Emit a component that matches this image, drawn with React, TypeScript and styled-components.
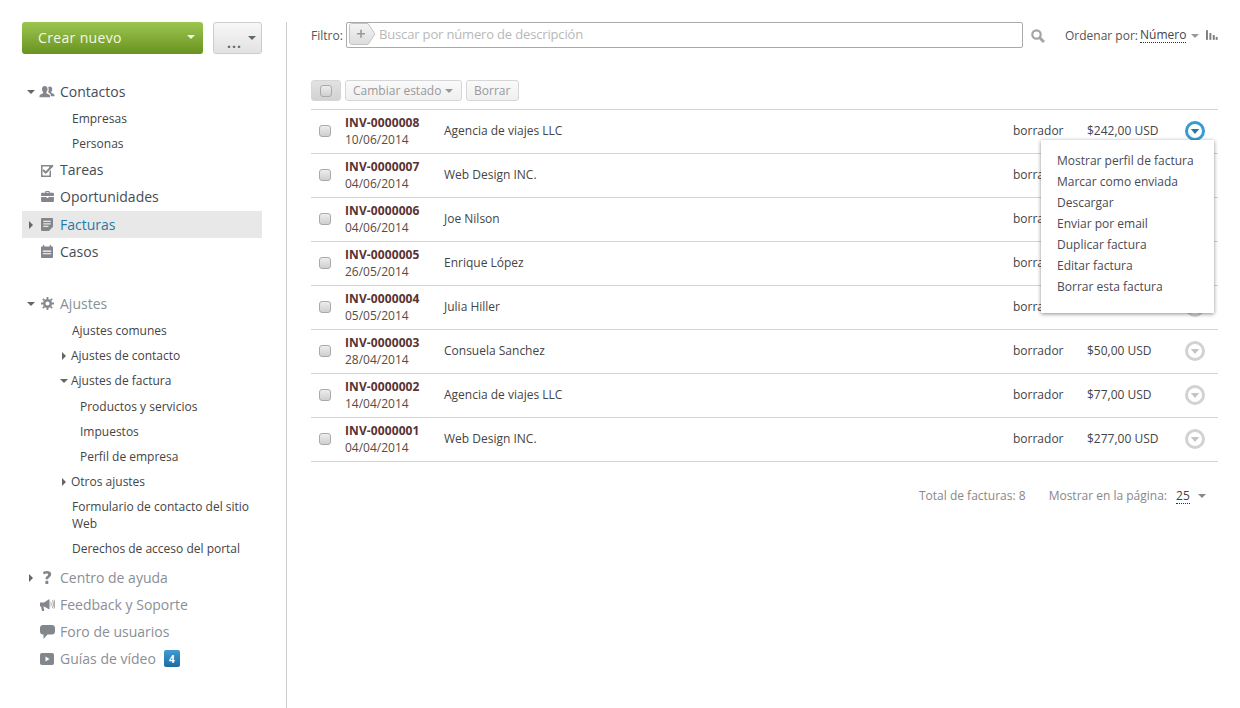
import React from "react";
import styled, { createGlobalStyle } from "styled-components";

const Global = createGlobalStyle`
  html, body { margin: 0; padding: 0; background: #fff; }
  body { font-family: "Open Sans", "Liberation Sans", sans-serif; color: #444; }
  * { box-sizing: border-box; }
`;

const Page = styled.div`
  display: flex;
  width: 1240px;
  height: 708px;
  padding: 22px 22px 0 22px;
  overflow: hidden;
`;

const Sidebar = styled.aside`
  width: 240px;
  flex: none;
  margin-right: 24px;
`;

const TopButtons = styled.div`
  display: flex;
  gap: 10px;
  height: 32px;
  margin-bottom: 24px;
`;

const CreateButton = styled.div`
  width: 181px;
  border-radius: 3px;
  background: linear-gradient(#9cc550, #699320);
  color: #f4f8e4;
  font-size: 14px;
  letter-spacing: 0.35px;
  display: flex;
  align-items: center;
  justify-content: space-between;
  padding: 0 8px 2px 16px;
`;

const MoreButton = styled.div`
  width: 49px;
  border: 1px solid #ccc;
  border-radius: 3px;
  background: linear-gradient(#f7f7f7, #e2e2e2);
  color: #666;
  font-size: 14px;
  font-weight: 700;
  letter-spacing: 1px;
  display: flex;
  align-items: center;
  justify-content: space-between;
  padding: 0 5px 0 13px;
  line-height: 1;
`;

const Dots = styled.span`
  padding-top: 9px;
`;

const Caret = styled.i<{ $dir?: "down" | "right"; $color?: string; $size?: number }>`
  display: block;
  flex: none;
  width: 0;
  height: 0;
  ${(p) => {
    const s = p.$size ?? 4;
    const c = p.$color ?? "#666";
    return p.$dir === "right"
      ? `border-top: ${s}px solid transparent; border-bottom: ${s}px solid transparent; border-left: ${s}px solid ${c};`
      : `border-left: ${s}px solid transparent; border-right: ${s}px solid transparent; border-top: ${s}px solid ${c};`;
  }}
`;

const NavGroup = styled.nav<{ $gap?: number }>`
  margin-top: ${(p) => p.$gap ?? 0}px;
`;

const NavRow = styled.div<{ $active?: boolean; $muted?: boolean; $spaced?: boolean }>`
  display: flex;
  align-items: center;
  height: 27px;
  margin-top: ${(p) => (p.$spaced ? 1 : 0)}px;
  font-size: 14px;
  background: ${(p) => (p.$active ? "#e8e8e8" : "transparent")};
  color: ${(p) => (p.$active ? "#1f7ba6" : p.$muted ? "#8a8f96" : "#444c55")};
`;

const CaretSlot = styled.span`
  width: 18px;
  flex: none;
  display: flex;
  justify-content: center;
`;

const IconSlot = styled.span`
  width: 14px;
  margin-right: 6px;
  flex: none;
  display: flex;
  align-items: center;
  justify-content: center;
  & > svg { flex: none; }
`;

const SubList = styled.div<{ $end?: number }>`
  padding: 1px 0 ${(p) => p.$end ?? 0}px;
`;

const SubRow = styled.div<{ $level?: number; $tree?: boolean }>`
  display: flex;
  align-items: center;
  min-height: 25px;
  font-size: 12px;
  line-height: 17px;
  color: #444;
  padding: 4px 10px 4px ${(p) => (p.$level === 2 ? 58 : p.$tree ? 37 : 50)}px;
`;

const SubNest = styled.div`
  padding-top: 1px;
`;

const TreeCaret = styled.span`
  width: 12px;
  padding-right: 2px;
  flex: none;
  display: flex;
  justify-content: center;
`;

const Badge = styled.span`
  width: 16px;
  height: 17px;
  margin-left: 8px;
  border-radius: 2px;
  background: linear-gradient(#3f9cd3, #1b6ca2);
  color: #fff;
  font-size: 10px;
  font-weight: 700;
  display: flex;
  align-items: center;
  justify-content: center;
`;

const Main = styled.main`
  flex: 1;
  border-left: 1px solid #ccc;
  padding-left: 24px;
  min-width: 0;
`;

const FilterBar = styled.div`
  display: flex;
  align-items: center;
  height: 26px;
  font-size: 12px;
`;

const FilterLabel = styled.span`
  width: 35px;
  flex: none;
  color: #555;
`;

const SearchBox = styled.div`
  width: 677px;
  height: 26px;
  flex: none;
  border: 1px solid #aaa;
  border-radius: 2px;
  display: flex;
  align-items: center;
  padding: 0 0 2px 2px;
  gap: 3px;
  color: #b8b8b8;
  font-size: 13px;
  letter-spacing: -0.16px;
`;

const SearchIcon = styled.span`
  width: 42px;
  flex: none;
  display: flex;
  padding: 1px 0 0 8px;
`;

const SortLabel = styled.span`
  color: #555;
  white-space: nowrap;
`;

const Dotted = styled.span`
  border-bottom: 1px dotted #333;
  color: #444;
  line-height: 15px;
`;

const SortValue = styled(Dotted)`
  margin-left: 2px;
`;

const SortCaret = styled.span`
  margin: 1px 7px 0 5px;
`;

const Toolbar = styled.div`
  display: flex;
  gap: 4px;
  height: 21px;
  margin-top: 32px;
  margin-bottom: 8px;
`;

const ToolButton = styled.div<{ $w: number; $pressed?: boolean }>`
  width: ${(p) => p.$w}px;
  border: 1px solid #d6d6d6;
  border-radius: 3px;
  background: ${(p) => (p.$pressed ? "linear-gradient(#e2e2e2, #d2d2d2)" : "linear-gradient(#fafafa, #efefef)")};
  color: #999;
  font-size: 12px;
  display: flex;
  align-items: center;
  justify-content: ${(p) => (p.$pressed ? "center" : "flex-start")};
  padding: ${(p) => (p.$pressed ? "0" : "0 7px")};
  gap: 4px;
`;

const Check = styled.span`
  display: block;
  width: 12px;
  height: 12px;
  border: 1px solid #aaa;
  border-radius: 3px;
  background: linear-gradient(#ededed, #cfcfcf);
`;

const List = styled.div`
  border-top: 1px solid #d4d4d4;
  width: 907px;
`;

const Row = styled.div`
  display: grid;
  grid-template-columns: 34px 99px 1fr 74px 98px 33px;
  align-items: center;
  height: 44px;
  padding-bottom: 2px;
  border-bottom: 1px solid #d4d4d4;
  font-size: 12px;
  color: #444;
`;

const CheckCell = styled.div`
  padding-left: 8px;
`;

const NumberCell = styled.div`
  line-height: 17px;
  padding-top: 1px;
`;

const InvNumber = styled.div`
  font-weight: 700;
  color: #5b3232;
  letter-spacing: 0.1px;
`;

const InvDate = styled.div`
  color: #5c4a3c;
`;

const ActionCell = styled.div`
  position: relative;
  height: 20px;
`;

const Menu = styled.div`
  position: absolute;
  top: 19px;
  right: 4px;
  width: 173px;
  height: 173px;
  background: #fff;
  box-shadow: 0 1px 4px rgba(0, 0, 0, 0.45);
  padding: 10px 16px;
  z-index: 2;
`;

const MenuItem = styled.div`
  height: 21px;
  line-height: 21px;
  font-size: 12px;
  color: #4a4a55;
  white-space: nowrap;
`;

const Footer = styled.div`
  display: flex;
  align-items: center;
  width: 907px;
  margin-top: 25px;
  padding-left: 608px;
  font-size: 12px;
  color: #888;
  height: 17px;
`;

const FooterCount = styled.span`
  margin-right: 23px;
  white-space: nowrap;
`;

const FooterValue = styled(Dotted)`
  margin-left: 9px;
  margin-right: 8px;
`;

const ic = { width: 15, height: 15, viewBox: "0 0 16 16", fill: "#83878c" };

const People = () => (
  <svg {...ic} width={16} height={15}>
    <path d="M11 2.6c1.6 0 2.6 1.2 2.6 2.9 0 1.2-.5 2.3-1.1 2.8v1.1l2.6 1.2c.6.3.9.7.9 1.4v1H12v-1.1c0-1.1-.6-1.8-1.6-2.3l-1-.5V8c.5-.7.3-1.2.3-2.4 0-1.1 0-2.1-.4-2.5.5-.3 1-.5 1.7-.5z" />
    <path d="M5.6 2c1.9 0 3 1.4 3 3.4 0 1.3-.6 2.6-1.3 3.2v1.2l2.8 1.3c.7.3 1.1.8 1.1 1.6V14H0v-1.3c0-.8.4-1.3 1.1-1.6l2.8-1.3V8.6C3.2 8 2.6 6.700 2.600 5.400 2.600 3.400 3.700 2 5.600 2z" />
  </svg>
);
const Task = () => (
  <svg {...ic} width={13} height={14} viewBox="0 0 13 14">
    <path fillRule="evenodd" d="M0 2h10v2L8.500 5.200V3.500h-7v9h7V8.500L10 7v7H0z" />
    <path d="M2.800 6.300l2 2L11 1.500l1.700 1.600L4.800 11 1.300 7.800z" />
  </svg>
);
const Case = () => (
  <svg {...ic} width={13} height={11} viewBox="0 0 14 12">
    <path d="M4.500 2V1c0-.6.400-1 1-1h3c.6 0 1 .4 1 1v1H13c.6 0 1 .4 1 1v2.500H0V3c0-.6.400-1 1-1zm1.200 0h2.600V1.200H5.700zM0 6.500h6v1h2v-1h6V11c0 .6-.4 1-1 1H1c-.6 0-1-.4-1-1z" />
  </svg>
);
const Note = () => (
  <svg {...ic} width={12} height={13} viewBox="0 0 13 14">
    <path fillRule="evenodd" d="M1 0h11c.6 0 1 .4 1 1v8.500L8.500 14H1c-.6 0-1-.4-1-1V1c0-.6.4-1 1-1zm1.500 3v1.200h8V3zm0 2.700v1.200h8V5.700zm0 2.700v1.200H8V8.400z" />
  </svg>
);
const Cal = () => (
  <svg {...ic} width={12} height={13} viewBox="0 0 13 14">
    <path fillRule="evenodd" d="M2 0h1.500v1.500h6V0H11v1.500h1c.6 0 1 .4 1 1V13c0 .6-.4 1-1 1H1c-.6 0-1-.4-1-1V2.500c0-.6.400-1 1-1h1zM2 6v1.200h9V6zm0 2.800V10h9V8.800z" />
  </svg>
);
const Gear = () => (
  <svg width={13} height={13} viewBox="0 0 13 13" fill="none" stroke="#83878c">
    <circle cx="6.500" cy="6.500" r="3.300" strokeWidth="2.400" />
    <path strokeWidth="1.800" d="M6.500 0v2M6.500 11v2M0 6.500h2M11 6.500h2M1.900 1.900l1.400 1.400M9.700 9.700l1.400 1.400M1.900 11.100l1.400-1.400M9.700 3.300l1.400-1.400" />
  </svg>
);
const Help = () => (
  <svg width={12} height={13} viewBox="0 0 12 13" fill="#83878c">
    <path d="M2 1C3.200.4 4.500.1 5.800.1 8.500.1 10.200 1.200 10.200 3.300c0 1.500-.8 2.300-1.900 3.100-.8.600-1.100.9-1.100 1.800H4.500c0-1.600.4-2.300 1.400-3 .8-.6 1.200-1 1.200-1.600 0-.7-.5-1-1.400-1-.8 0-1.900.2-3 .8zM4.400 9.700h2.900V13H4.400z" />
  </svg>
);
const Megaphone = () => (
  <svg width={15} height={14} viewBox="0 0 15 14" fill="#83878c">
    <path d="M0 4.500h4L9.500 1v10.500L4 8.500H3.500l.8 4.500H2L1 8.500H0z" />
    <path d="M10.700 3.500c1 .5 1 4.800 0 5.300zM12.500 2.300c1.600 1 1.600 7 0 8l-.4-.5c1-1 1-6 0-7zM14 1.500c1.400 1.500 1.400 8 0 9.500l-.4-.4c1-1.800 1-6.900 0-8.700z" />
  </svg>
);
const Bubble = () => (
  <svg width={15} height={14} viewBox="0 0 15 14" fill="#83878c">
    <path d="M3 0h9c1.700 0 3 1.300 3 3v3.500c0 1.700-1.300 3-3 3H7.500L3.500 14v-4.500H3c-1.700 0-3-1.300-3-3V3c0-1.700 1.300-3 3-3z" />
  </svg>
);
const Video = () => (
  <svg width={14} height={12} viewBox="0 0 14 12">
    <rect width="14" height="12" rx="2" fill="#83878c" />
    <path d="M5.500 3.500L9.500 6l-4 2.500z" fill="#fff" />
  </svg>
);
const Magnifier = () => (
  <svg width={14} height={14} viewBox="0 0 14 14" fill="none" stroke="#a4a4a4">
    <circle cx="5.500" cy="5.500" r="4.200" strokeWidth="2.200" />
    <path d="M8.500 8.500L13 13" strokeWidth="3" />
  </svg>
);
const Bars = () => (
  <svg width={12} height={10} viewBox="0 0 12 10" fill="#7e7e7e">
    <rect x="0" y="0" width="2" height="10" />
    <rect x="3.500" y="3" width="2" height="7" />
    <rect x="7" y="5" width="2" height="5" />
    <rect x="10" y="7" width="2" height="3" />
  </svg>
);
const PlusTag = () => (
  <svg width={27} height={22} viewBox="0 0 27 22">
    <defs>
      <linearGradient id="tag" x1="0" y1="0" x2="0" y2="1">
        <stop offset="0" stopColor="#f4f4f4" />
        <stop offset="1" stopColor="#dcdcdc" />
      </linearGradient>
    </defs>
    <path d="M2.500.5h16.500L26 11l-7 10.500H2.500c-1 0-2-1-2-2v-17c0-1 1-2 2-2z" fill="url(#tag)" stroke="#c4c4c4" />
    <path d="M8 10h3.200V6.800h1.600V10H16v1.600h-3.200v3.200h-1.600v-3.200H8z" fill="#999" />
  </svg>
);
const RowAction = ({ color, tri }: { color: string; tri: string }) => (
  <svg width={20} height={20} viewBox="0 0 20 20">
    <circle cx="10" cy="10" r="8.500" fill="none" stroke={color} strokeWidth="3" />
    <path d="M5.800 8h8.400L10 13z" fill={tri} />
  </svg>
);

const invoices = [
  ["INV-0000008", "10/06/2014", "Agencia de viajes LLC", "$242,00 USD"],
  ["INV-0000007", "04/06/2014", "Web Design INC.", "$120,00 USD"],
  ["INV-0000006", "04/06/2014", "Joe Nilson", "$98,00 USD"],
  ["INV-0000005", "26/05/2014", "Enrique López", "$64,00 USD"],
  ["INV-0000004", "05/05/2014", "Julia Hiller", "$180,00 USD"],
  ["INV-0000003", "28/04/2014", "Consuela Sanchez", "$50,00 USD"],
  ["INV-0000002", "14/04/2014", "Agencia de viajes LLC", "$77,00 USD"],
  ["INV-0000001", "04/04/2014", "Web Design INC.", "$277,00 USD"],
];

const menuItems = [
  "Mostrar perfil de factura",
  "Marcar como enviada",
  "Descargar",
  "Enviar por email",
  "Duplicar factura",
  "Editar factura",
  "Borrar esta factura",
];

const Item = ({
  caret,
  icon,
  children,
  active,
  muted,
  spaced,
}: {
  caret?: "down" | "right";
  icon: React.ReactNode;
  children: React.ReactNode;
  active?: boolean;
  muted?: boolean;
  spaced?: boolean;
}) => (
  <NavRow $active={active} $muted={muted} $spaced={spaced}>
    <CaretSlot>{caret && <Caret $dir={caret} />}</CaretSlot>
    <IconSlot>{icon}</IconSlot>
    {children}
  </NavRow>
);

export default function App() {
  return (
    <Page>
      <Global />
      <Sidebar>
        <TopButtons>
          <CreateButton>
            Crear nuevo
            <Caret $color="#f4f8e4" />
          </CreateButton>
          <MoreButton>
            <Dots>...</Dots>
            <Caret $color="#666" />
          </MoreButton>
        </TopButtons>
        <NavGroup>
          <Item caret="down" icon={<People />}>Contactos</Item>
          <SubList>
            <SubRow>Empresas</SubRow>
            <SubRow>Personas</SubRow>
          </SubList>
          <Item icon={<Task />}>Tareas</Item>
          <Item icon={<Case />}>Oportunidades</Item>
          <Item caret="right" icon={<Note />} active spaced>Facturas</Item>
          <Item icon={<Cal />}>Casos</Item>
        </NavGroup>
        <NavGroup $gap={25}>
          <Item caret="down" icon={<Gear />} muted>Ajustes</Item>
          <SubList $end={3}>
            <SubRow>Ajustes comunes</SubRow>
            <SubRow $tree><TreeCaret><Caret $dir="right" /></TreeCaret>Ajustes de contacto</SubRow>
            <SubRow $tree><TreeCaret><Caret $dir="down" /></TreeCaret>Ajustes de factura</SubRow>
            <SubNest>
              <SubRow $level={2}>Productos y servicios</SubRow>
              <SubRow $level={2}>Impuestos</SubRow>
              <SubRow $level={2}>Perfil de empresa</SubRow>
            </SubNest>
            <SubRow $tree><TreeCaret><Caret $dir="right" /></TreeCaret>Otros ajustes</SubRow>
            <SubRow>Formulario de contacto del sitio Web</SubRow>
            <SubRow>Derechos de acceso del portal</SubRow>
          </SubList>
          <Item caret="right" icon={<Help />} muted>Centro de ayuda</Item>
          <Item icon={<Megaphone />} muted>Feedback y Soporte</Item>
          <Item icon={<Bubble />} muted>Foro de usuarios</Item>
          <Item icon={<Video />} muted>
            Guías de vídeo
            <Badge>4</Badge>
          </Item>
        </NavGroup>
      </Sidebar>
      <Main>
        <FilterBar>
          <FilterLabel>Filtro:</FilterLabel>
          <SearchBox>
            <PlusTag />
            Buscar por número de descripción
          </SearchBox>
          <SearchIcon><Magnifier /></SearchIcon>
          <SortLabel>Ordenar por:</SortLabel>
          <SortValue>Número</SortValue>
          <SortCaret><Caret $color="#999" /></SortCaret>
          <Bars />
        </FilterBar>
        <Toolbar>
          <ToolButton $w={30} $pressed><Check /></ToolButton>
          <ToolButton $w={117}>
            Cambiar estado
            <Caret $color="#999" />
          </ToolButton>
          <ToolButton $w={53}>Borrar</ToolButton>
        </Toolbar>
        <List>
          {invoices.map(([num, date, name, amount], i) => (
            <Row key={num}>
              <CheckCell><Check /></CheckCell>
              <NumberCell>
                <InvNumber>{num}</InvNumber>
                <InvDate>{date}</InvDate>
              </NumberCell>
              <div>{name}</div>
              <div>borrador</div>
              <div>{amount}</div>
              <ActionCell>
                {i === 0 ? <RowAction color="#3a9bd0" tri="#2478a8" /> : <RowAction color="#d2d2d2" tri="#c4c4c4" />}
                {i === 0 && (
                  <Menu>
                    {menuItems.map((m) => (
                      <MenuItem key={m}>{m}</MenuItem>
                    ))}
                  </Menu>
                )}
              </ActionCell>
            </Row>
          ))}
        </List>
        <Footer>
          <FooterCount>Total de facturas: 8</FooterCount>
          Mostrar en la página:
          <FooterValue>25</FooterValue>
          <Caret $color="#888" />
        </Footer>
      </Main>
    </Page>
  );
}
